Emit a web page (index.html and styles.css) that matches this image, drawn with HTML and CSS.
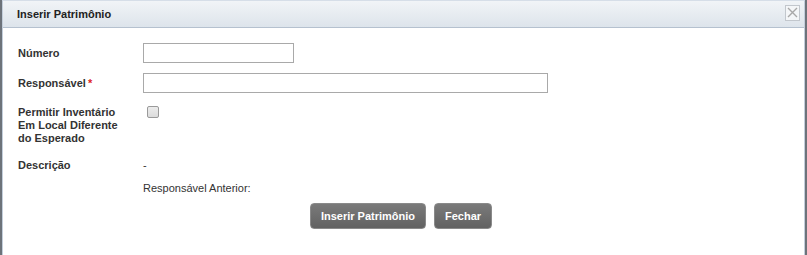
FILE: index.html
```html
<!DOCTYPE html>
<html>
<head>
<meta charset="utf-8">
<link rel="stylesheet" href="styles.css">
</head>
<body>
  <div class="dialog">
    <div class="dialog-title">
      <span>Inserir Patrimônio</span>
      <button class="close" title="Fechar">
        <svg width="11" height="11" viewBox="0 0 11 11"><path d="M1 1 L10 10 M10 1 L1 10" stroke="#a8a8a8" stroke-width="1.4" fill="none"/></svg>
      </button>
    </div>
    <div class="dialog-body">
      <form class="form">
        <label class="lbl lbl-input">Número</label>
        <div class="field"><input type="text" class="txt txt-short"></div>

        <label class="lbl lbl-input">Responsável<span class="req">*</span></label>
        <div class="field"><input type="text" class="txt txt-long"></div>

        <label class="lbl row-check">Permitir Inventário<br>Em Local Diferente<br>do Esperado</label>
        <div class="field row-check"><span class="check"></span></div>

        <label class="lbl row-desc">Descrição</label>
        <div class="field value row-desc">-</div>

        <div></div>
        <div class="field value">Responsável Anterior:</div>
      </form>
      <div class="actions">
        <button type="button" class="btn">Inserir Patrimônio</button>
        <button type="button" class="btn">Fechar</button>
      </div>
    </div>
  </div>
</body>
</html>
```

FILE: styles.css
```css
html, body {
  margin: 0;
  padding: 0;
}
body {
  background: #6d737a;
  font-family: "Liberation Sans", Arial, sans-serif;
  font-size: 11px;
  color: #333;
  padding: 0 2px;
  height: 255px;
  overflow: hidden;
}

.dialog {
  background: #fff;
  border: 1px solid #c3cedb;
  border-top: 1px solid #d6dee8;
  height: 260px;
}

.dialog-title {
  display: flex;
  align-items: center;
  justify-content: space-between;
  height: 26px;
  padding: 0 4px 0 14px;
  background: linear-gradient(to bottom, #f1f4f7, #dde4eb);
  border-bottom: 1px solid #b5c1cf;
  font-weight: bold;
  color: #222;
}

.close {
  display: flex;
  align-items: center;
  justify-content: center;
  width: 15px;
  height: 16px;
  margin-top: -3px;
  padding: 0;
  background: #f4f6f8;
  border: 1px solid #c2c7cd;
  cursor: pointer;
}

.dialog-body {
  padding: 15px 0 0 15px;
}

.form {
  display: grid;
  grid-template-columns: 125px 1fr;
  row-gap: 10px;
}

.lbl {
  font-weight: bold;
  line-height: 13px;
  color: #333;
}
.lbl-input {
  align-self: center;
}
.req {
  color: #d22;
  margin-left: 2px;
}

.row-check { margin-top: 3px; }
.row-desc { margin-top: 4px; }

.txt {
  display: block;
  box-sizing: border-box;
  height: 20px;
  border: 1px solid #a9a9a9;
  margin: 0;
  padding: 1px 3px;
  font: inherit;
}
.txt-short { width: 151px; }
.txt-long { width: 405px; }

.check {
  display: block;
  box-sizing: border-box;
  width: 12px;
  height: 12px;
  margin: 0 0 0 4px;
  border: 1px solid #9a9a9a;
  border-radius: 2px;
  background: linear-gradient(to bottom, #ececec, #dcdcdc);
}

.value {
  font-weight: normal;
  color: #333;
  line-height: 13px;
}

.actions {
  display: flex;
  justify-content: center;
  gap: 8px;
  margin-top: 8px;
  padding-right: 20px;
}

.btn {
  height: 26px;
  padding: 0 10px;
  border: 1px solid #8a8a8a;
  border-radius: 4px;
  background: linear-gradient(to bottom, #7a7a7a, #626262);
  color: #fff;
  font-family: "Liberation Sans", Arial, sans-serif;
  font-size: 11px;
  font-weight: bold;
  cursor: pointer;
}
```
